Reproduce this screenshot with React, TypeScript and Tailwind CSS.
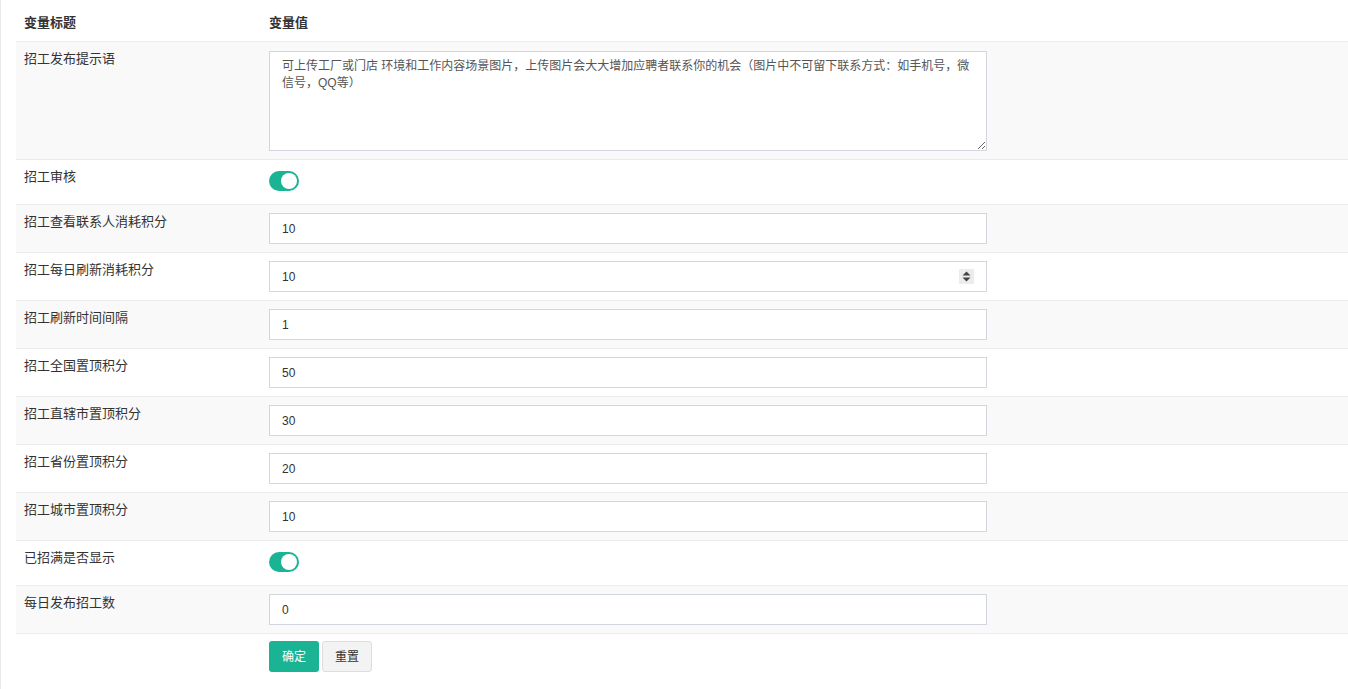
import { useState } from 'react';

type Field =
  | { kind: 'textarea'; label: string; value: string }
  | { kind: 'switch'; label: string; on: boolean }
  | { kind: 'input'; label: string; value: string; spinner?: boolean };

const fields: Field[] = [
  {
    kind: 'textarea',
    label: '招工发布提示语',
    value:
      '可上传工厂或门店 环境和工作内容场景图片，上传图片会大大增加应聘者联系你的机会（图片中不可留下联系方式：如手机号，微信号，QQ等）',
  },
  { kind: 'switch', label: '招工审核', on: true },
  { kind: 'input', label: '招工查看联系人消耗积分', value: '10' },
  { kind: 'input', label: '招工每日刷新消耗积分', value: '10', spinner: true },
  { kind: 'input', label: '招工刷新时间间隔', value: '1' },
  { kind: 'input', label: '招工全国置顶积分', value: '50' },
  { kind: 'input', label: '招工直辖市置顶积分', value: '30' },
  { kind: 'input', label: '招工省份置顶积分', value: '20' },
  { kind: 'input', label: '招工城市置顶积分', value: '10' },
  { kind: 'switch', label: '已招满是否显示', on: true },
  { kind: 'input', label: '每日发布招工数', value: '0' },
];

const Toggle = ({ on }: { on: boolean }) => (
  <span
    className={`relative block h-[20px] w-[30px] rounded-full ${
      on ? 'bg-[#1ab394]' : 'bg-[#dcdcdc]'
    }`}
  >
    <span
      className={`absolute top-[2px] h-[16px] w-[16px] rounded-full bg-white ${
        on ? 'left-[12px]' : 'left-[2px]'
      }`}
    />
  </span>
);

const Spinner = () => (
  <span className="absolute right-[13px] top-[16px] flex h-[15px] w-[15px] items-center justify-center bg-[#ececec]">
    <svg width="9" height="11" viewBox="0 0 9 11">
      <path d="M4.5 0.5 L8.5 4.5 H0.5 Z" fill="#444" />
      <path d="M4.5 10.5 L8.5 6.5 H0.5 Z" fill="#444" />
    </svg>
  </span>
);

export default function App() {
  const [values, setValues] = useState<string[]>(
    fields.map((f) => (f.kind === 'switch' ? '' : f.value)),
  );

  return (
    <div
      className="min-h-[689px] border-l border-[#e7eaec] pl-[15px] text-[13px] text-[#333]"
      style={{ fontFamily: '"Liberation Sans", "Noto Sans CJK SC", sans-serif' }}
    >
      <div className="flex h-[41px] items-start font-bold">
        <div className="w-[245px] pl-[8px] pt-[14px] leading-[18px]">变量标题</div>
        <div className="pl-[8px] pt-[14px] leading-[18px]">变量值</div>
      </div>

      {fields.map((f, i) => (
        <div
          key={f.label}
          className={`flex border-t border-[#ececec] ${i % 2 === 0 ? 'bg-[#f9f9f9]' : 'bg-white'}`}
        >
          <div className="w-[245px] shrink-0 pl-[8px] pt-[8px] leading-[18px]">{f.label}</div>
          <div
            className={`relative pl-[8px] ${
              f.kind === 'switch' ? 'pt-[11px] pb-[13px]' : f.kind === 'textarea' ? 'pt-[9px] pb-[8px]' : 'pt-[8px] pb-[8px]'
            }`}
          >
            {f.kind === 'textarea' && (
              <textarea
                className="block h-[100px] w-[718px] resize border border-[#d2d6de] bg-white px-[12px] py-[6px] text-[12px] leading-[17px] text-[#555] outline-none"
                value={values[i]}
                onChange={(e) => setValues(values.map((v, j) => (j === i ? e.target.value : v)))}
              />
            )}
            {f.kind === 'switch' && <Toggle on={f.on} />}
            {f.kind === 'input' && (
              <>
                <input
                  className="block h-[31px] w-[718px] border border-[#d2d6de] bg-white px-[12px] text-[12px] text-[#333] outline-none"
                  value={values[i]}
                  onChange={(e) => setValues(values.map((v, j) => (j === i ? e.target.value : v)))}
                />
                {f.spinner && <Spinner />}
              </>
            )}
          </div>
        </div>
      ))}

      <div className="flex border-t border-[#ececec]">
        <div className="w-[245px] shrink-0" />
        <div className="flex gap-[3px] pl-[8px] pt-[7px]">
          <button className="h-[31px] w-[50px] rounded-[3px] bg-[#1ab394] text-[12px] text-white">确定</button>
          <button className="h-[31px] w-[50px] rounded-[3px] border border-[#dddddd] bg-[#f3f3f3] text-[12px] text-[#333]">
            重置
          </button>
        </div>
      </div>
    </div>
  );
}
